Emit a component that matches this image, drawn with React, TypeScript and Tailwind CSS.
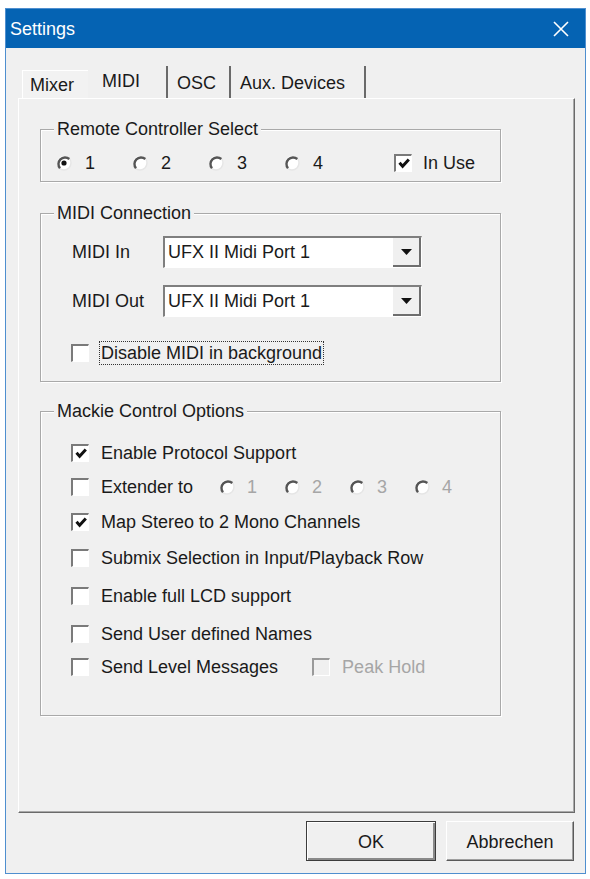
import React from "react";

const font = { fontFamily: '"Liberation Sans", Arial, sans-serif' };

function Radio({ checked = false }: { checked?: boolean }) {
  return (
    <svg width="16" height="16" viewBox="0 0 16 16" className="shrink-0">
      <circle cx="8" cy="8" r="7" fill="#ffffff" />
      <path d="M12.95 3.05 A7 7 0 0 1 3.05 12.95" fill="none" stroke="#e6e6e6" strokeWidth="1.5" />
      <path d="M13.3 4 A6.6 6.6 0 0 0 4 13.3" fill="none" stroke="#555555" strokeWidth="2.4" />
      {checked && <circle cx="8" cy="8" r="2.6" fill="#111111" />}
    </svg>
  );
}

function Check({ checked = false, disabled = false }: { checked?: boolean; disabled?: boolean }) {
  return (
    <span
      className={
        "flex h-[18px] w-[18px] shrink-0 items-center justify-center border-t-2 border-l-2 border-r border-b border-r-white border-b-white " +
        (disabled ? "border-t-[#9a9a9a] border-l-[#9a9a9a] bg-[#f0f0f0]" : "border-t-[#7a7a7a] border-l-[#7a7a7a] bg-white")
      }
    >
      {checked && (
        <svg width="12" height="11" viewBox="0 0 12 11">
          <path d="M1.5 4.8 L4.6 8.2 L10.8 1.5" fill="none" stroke="#111" strokeWidth="3" />
        </svg>
      )}
    </span>
  );
}

function Combo({ value }: { value: string }) {
  return (
    <div className="flex h-[32px] w-[259px] border-t-2 border-l-2 border-r border-b border-t-[#7f7f7f] border-l-[#7f7f7f] border-r-white border-b-white bg-white">
      <span className="flex-1 pl-[3px] leading-[28px] text-[18px] text-[#1a1a1a]">{value}</span>
      <span className="flex w-[28px] items-center justify-center border-r-2 border-b-2 border-[#6e6e6e] bg-[#f0f0f0]">
        <svg width="11" height="6" viewBox="0 0 11 6">
          <path d="M0 0 H11 L5.5 6 Z" fill="#111" />
        </svg>
      </span>
    </div>
  );
}

function Group({ label, className, children }: { label: string; className?: string; children: React.ReactNode }) {
  return (
    <fieldset
      className={
        "ml-[21px] w-[461px] border border-[#a9a9a9] shadow-[inset_1px_1px_0_#ffffff,1px_1px_0_#ffffff] " + (className ?? "")
      }
    >
      <legend className="ml-[13px] bg-[#f0f0f0] px-[3px] text-[18px] leading-[20px] text-[#1a1a1a]">{label}</legend>
      {children}
    </fieldset>
  );
}

function CheckRow({
  label,
  checked,
  className,
  children,
}: {
  label: string;
  checked?: boolean;
  className?: string;
  children?: React.ReactNode;
}) {
  return (
    <div className={"flex h-[22px] items-center " + (className ?? "")}>
      <Check checked={checked} />
      <span className="ml-[12px] text-[18px] text-[#1a1a1a]">{label}</span>
      {children}
    </div>
  );
}

export default function App() {
  return (
    <div className="h-[879px] w-[590px] bg-white pl-[5px] pt-[8px]" style={font}>
      <div className="flex h-[866px] w-[581px] flex-col border border-[#4f8fcf] bg-[#f0f0f0]">
        {/* title bar */}
        <div className="flex h-[42px] items-center justify-between bg-[#0563b3] pl-[4px] pr-[16px]">
          <span className="mt-[2px] text-[18px] text-white">Settings</span>
          <svg width="16" height="16" viewBox="0 0 16 16">
            <path d="M1 1 L15 15 M15 1 L1 15" stroke="#ffffff" strokeWidth="1.6" />
          </svg>
        </div>

        <div className="flex flex-1 flex-col pl-[12px] pr-[11px] pt-[18px]">
          {/* tabs */}
          <div className="flex h-[32px] items-end pl-[4px] text-[18px] text-[#1a1a1a]">
            <div className="flex h-[28px] w-[66px] items-center border-t border-l border-white bg-[#f2f2f2] pl-[7px] pt-[2px]">Mixer</div>
            <div className="flex h-[34px] w-[78px] items-start pl-[14px] pt-[4px]">MIDI</div>
            <div className="flex h-[32px] w-[63px] items-center border-l-2 border-[#6a6a6a] pl-[9px] pt-[2px]">OSC</div>
            <div className="flex h-[32px] w-[137px] items-center border-x-2 border-[#6a6a6a] pl-[9px] pt-[2px]">Aux. Devices</div>
          </div>

          {/* panel */}
          <div className="h-[715px] w-[557px] border border-t-white border-l-white border-r-[#6a6a6a] border-b-[#6a6a6a] shadow-[inset_-1px_-1px_0_#a9a9a9] pt-[20px]">
            <Group label="Remote Controller Select" className="pb-[8px]">
              <div className="mt-[14px] flex h-[20px] items-center pl-[15px] text-[18px] text-[#1a1a1a]">
                {["1", "2", "3", "4"].map((n, i) => (
                  <div key={n} className="flex w-[76px] items-center">
                    <Radio checked={i === 0} />
                    <span className="ml-[13px]">{n}</span>
                  </div>
                ))}
                <div className="ml-[34px] flex items-center">
                  <Check checked />
                  <span className="ml-[11px]">In Use</span>
                </div>
              </div>
            </Group>

            <Group label="MIDI Connection" className="mt-[21px] pb-[16px]">
              <div className="pl-[30px]">
                <div className="mt-[13px] flex items-center text-[18px] text-[#1a1a1a]">
                  <span className="w-[92px] pl-[1px]">MIDI In</span>
                  <Combo value="UFX II Midi Port 1" />
                </div>
                <div className="mt-[17px] flex items-center text-[18px] text-[#1a1a1a]">
                  <span className="w-[92px] pl-[1px]">MIDI Out</span>
                  <Combo value="UFX II Midi Port 1" />
                </div>
                <div className="mt-[24px] flex h-[24px] items-center">
                  <Check />
                  <span className="ml-[10px] border border-dotted border-[#333] px-[1px] text-[18px] leading-[22px] text-[#1a1a1a]">
                    Disable MIDI in background
                  </span>
                </div>
              </div>
            </Group>

            <Group label="Mackie Control Options" className="mt-[19px] pb-[37px]">
              <div className="pl-[30px]">
                <CheckRow label="Enable Protocol Support" checked className="mt-[21px]" />
                <CheckRow label="Extender to" className="mt-[12px]">
                  <div className="ml-[26px] flex items-center text-[18px] text-[#a6a6a6]">
                    {["1", "2", "3", "4"].map((n) => (
                      <div key={n} className="flex w-[65px] items-center">
                        <Radio />
                        <span className="ml-[12px]">{n}</span>
                      </div>
                    ))}
                  </div>
                </CheckRow>
                <CheckRow label="Map Stereo to 2 Mono Channels" checked className="mt-[13px]" />
                <CheckRow label="Submix Selection in Input/Playback Row" className="mt-[14px]" />
                <CheckRow label="Enable full LCD support" className="mt-[16px]" />
                <CheckRow label="Send User defined Names" className="mt-[16px]" />
                <CheckRow label="Send Level Messages" className="mt-[11px]">
                  <div className="ml-[34px] flex items-center">
                    <Check disabled />
                    <span className="ml-[12px] text-[18px] text-[#a6a6a6]">Peak Hold</span>
                  </div>
                </CheckRow>
              </div>
            </Group>
          </div>

          {/* buttons */}
          <div className="mt-[8px] flex justify-end gap-[10px] pb-[12px]">
            <button className="h-[40px] w-[130px] border border-[#3c3c3c] bg-[#f0f0f0] pt-[2px] text-[18px] text-[#1a1a1a] shadow-[inset_1px_1px_0_#ffffff,inset_-2px_-2px_0_#8a8a8a]">
              OK
            </button>
            <button className="h-[40px] w-[128px] border border-t-white border-l-white border-r-[#5a5a5a] border-b-[#5a5a5a] bg-[#f0f0f0] pt-[2px] text-[18px] text-[#1a1a1a] shadow-[inset_-1px_-1px_0_#a0a0a0]">
              Abbrechen
            </button>
          </div>
        </div>
      </div>
    </div>
  );
}
